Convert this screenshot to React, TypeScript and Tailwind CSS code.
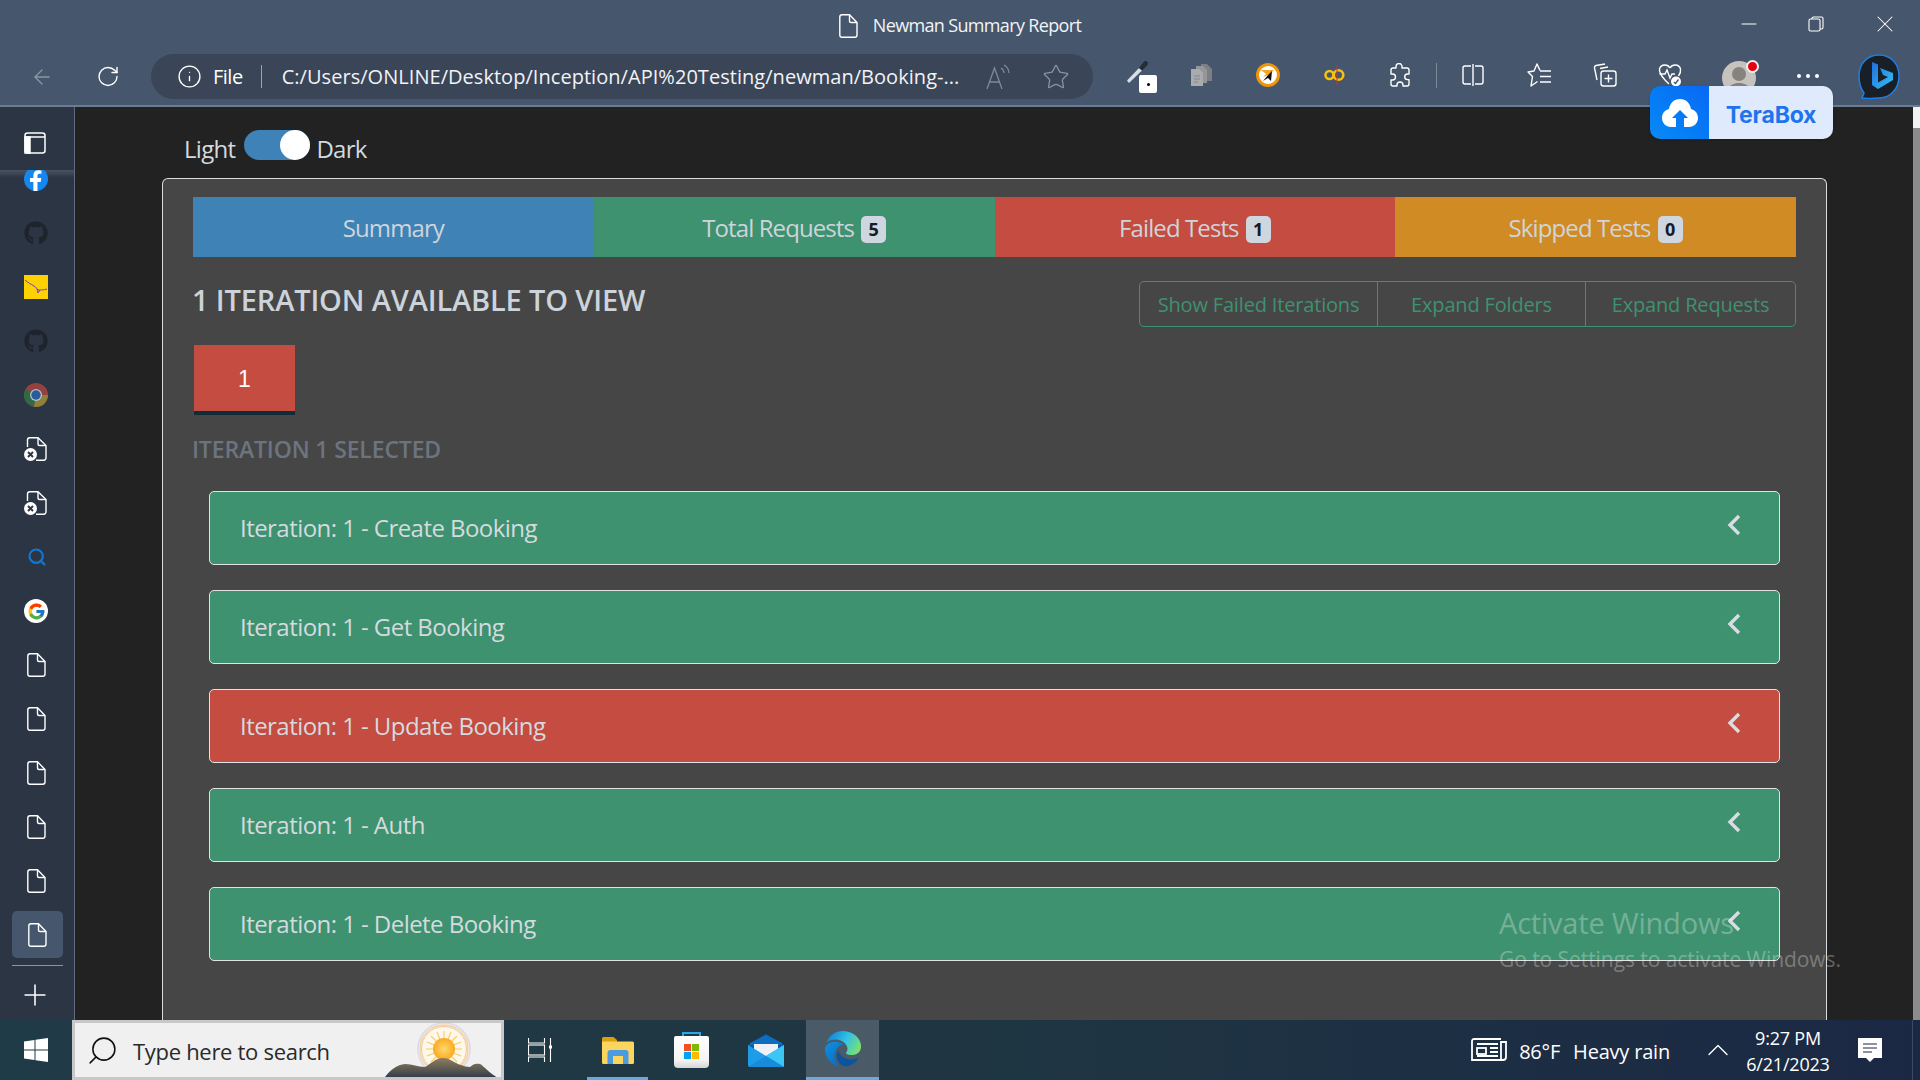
import { ArrowLeft, RotateCw, Info, Star, Minus, X, Plus, Search, ChevronUp } from "lucide-react";
import { FaGithub } from "react-icons/fa";
import { FcGoogle } from "react-icons/fc";

const FONT = "font-['Open_Sans','Noto_Sans',sans-serif]";

function Doc({ size = 24, className = "" }: { size?: number; className?: string }) {
  return (
    <svg width={size} height={size} viewBox="0 0 24 24" fill="none" stroke="currentColor" strokeWidth="1.4" className={className}>
      <path d="M6 .8h7.500L21 8.500V21a2.200 2.200 0 0 1-2.200 2.200H6A2.200 2.200 0 0 1 3.800 21V3A2.200 2.200 0 0 1 6 .8Z" />
      <path d="M13.500 1v6a1.500 1.500 0 0 0 1.500 1.500h6" />
    </svg>
  );
}

function DocX() {
  return (
    <svg width="24" height="24" viewBox="0 0 24 24" fill="none">
      <path d="M3.500 10V3A2.200 2.200 0 0 1 5.700 .8h8.300L22 8.500V21a2.200 2.200 0 0 1-2.200 2.200H12" stroke="white" strokeWidth="1.400" />
      <path d="M14 1v6a1.500 1.500 0 0 0 1.500 1.500h6.500" stroke="white" strokeWidth="1.400" />
      <circle cx="6.500" cy="17.500" r="6.500" fill="white" />
      <path d="M4 15l5 5M9 15l-5 5" stroke="#2b3543" strokeWidth="1.900" />
    </svg>
  );
}

function Yahoo() {
  return (
    <svg width="24" height="24" viewBox="0 0 24 24">
      <rect width="24" height="24" fill="#fdd000" />
      <path d="M1 5c3 3 6 4 9 6 2 1 3 3 4 4 3 0 6 0 9-1" fill="none" stroke="#7b3fb5" strokeWidth="1" />
      <path d="M13 14l1 4 2-3" fill="none" stroke="#7b3fb5" strokeWidth="1" />
    </svg>
  );
}

function Facebook() {
  return (
    <svg width="24" height="24" viewBox="0 0 24 24">
      <circle cx="12" cy="12" r="12" fill="#1787f0" />
      <path d="M13.500 24v-9h3.200l.6-3.900h-3.800V8.800c0-1.100.5-2 2.100-2h1.800V3.500s-1.500-.3-3-.3c-3.100 0-5 1.900-5 5.200v2.700H6v3.900h3.400v9Z" fill="white" />
    </svg>
  );
}

function Chrome() {
  return (
    <svg width="24" height="24" viewBox="0 0 24 24">
      <circle cx="12" cy="12" r="12" fill="#93423f" />
      <path d="M12 12 1.600 6A12 12 0 0 0 10 23.800Z" fill="#2e6a45" />
      <path d="M12 12h12A12 12 0 0 1 10 23.800Z" fill="#8d8238" />
      <circle cx="12" cy="12" r="6" fill="#b9bec6" />
      <circle cx="12" cy="12" r="4.700" fill="#2a5b9b" />
    </svg>
  );
}

function PanelIcon() {
  return (
    <svg width="22" height="22" viewBox="0 0 22 22" fill="none" stroke="white" strokeWidth="1.500">
      <rect x="1" y="1" width="20" height="20" rx="2.500" />
      <path d="M1 5h20" />
      <rect x="1" y="5" width="5" height="16" fill="white" />
    </svg>
  );
}

function SplitIcon() {
  return (
    <svg width="24" height="24" viewBox="0 0 24 24" fill="none" stroke="white" strokeWidth="1.400">
      <path d="M10 3H4a2 2 0 0 0-2 2v14a2 2 0 0 0 2 2h6M14 3h6a2 2 0 0 1 2 2v14a2 2 0 0 1-2 2h-6M12 1v22" />
    </svg>
  );
}

function FavIcon() {
  return (
    <svg width="24" height="24" viewBox="0 0 24 24" fill="none" stroke="white" strokeWidth="1.400" strokeLinejoin="round">
      <path d="M13 7.500 10 1 7 8 1 9l4.500 4.500L4 23l6.500-4.500" />
      <path d="M13 8h11M13 13.500h11M13 19h11" />
    </svg>
  );
}

function CollectionsIcon() {
  return (
    <svg width="26" height="24" viewBox="0 0 26 24" fill="none" stroke="white" strokeWidth="1.400">
      <path d="M13 1 4 2.500a2 2 0 0 0-1.500 2.400L5 17" />
      <path d="M8 5.500 16 4" />
      <rect x="9" y="8" width="15" height="15" rx="2.500" />
      <path d="M16.500 11.500v8M12.500 15.500h8" />
    </svg>
  );
}

function HeartIcon() {
  return (
    <svg width="24" height="24" viewBox="0 0 24 24" fill="none" stroke="white" strokeWidth="1.400">
      <path d="M12 5C10 1 3 .5 1.500 6 1 9 2.500 12 7 17l4 4M12 5c2-4 9-4.500 10.500 1 .5 3-.5 5-2 7" />
      <path d="M1.500 11H7l2-4 3 8 2-4h3" />
      <circle cx="18" cy="18.500" r="5" fill="white" stroke="none" />
      <path d="M16 19l1.500 1.500 3-4" stroke="#46566c" />
    </svg>
  );
}

function Eyedropper() {
  return (
    <div className="relative w-[31px] h-[33px]">
      <svg width="23" height="23" viewBox="0 0 23 23" className="absolute left-0 top-0">
        <path d="M1 20.500 13 8l3 2.500L3 23Z" fill="#d9dde2" />
        <path d="M13 8l5-6.500c2-1.500 5 1 3.500 3.500L16 10.500Z" fill="#262d38" />
      </svg>
      <div className="absolute right-0 bottom-0 w-[18px] h-[18px] bg-white rounded-[2px] flex items-center justify-center">
        <div className="w-[3px] h-[3px] bg-black rounded-full" />
      </div>
    </div>
  );
}

function GrayDocs() {
  return (
    <svg width="21" height="22" viewBox="0 0 21 22">
      <path d="M10 0h6l5 5v12H10Z" fill="#7d7f83" />
      <path d="M5 2h7l4 4v13H5Z" fill="#94969a" />
      <path d="M0 5h8l4 4v13H0Z" fill="#a9abae" />
      <path d="M3 12h6M3 15h6M3 18h4" stroke="#85878b" />
    </svg>
  );
}

function OrangeBadge() {
  return (
    <svg width="24" height="24" viewBox="0 0 24 24">
      <circle cx="12" cy="12" r="10.500" fill="white" stroke="#f09409" strokeWidth="3" />
      <path d="M5 7h13l-5 5-6 2 3-3Z" fill="#f6a623" />
      <path d="M7 18l6-7 3-3-1 10-3-3Z" fill="#111" />
    </svg>
  );
}

function CoIcon() {
  return (
    <svg width="21" height="22" viewBox="0 0 21 22" fill="none">
      <circle cx="5.500" cy="11" r="4" stroke="#f5c211" strokeWidth="2.600" />
      <circle cx="14.500" cy="11" r="4.800" stroke="#f5c211" strokeWidth="2.600" />
      <path d="M13 1v20" stroke="#d0302c" strokeWidth="1" />
    </svg>
  );
}

function PuzzleIcon() {
  return (
    <svg width="23" height="25" viewBox="0 0 23 25" fill="none" stroke="white" strokeWidth="1.400" strokeLinejoin="round">
      <path d="M8 3.500a3 3 0 0 1 6 0V5h5a2 2 0 0 1 2 2v4h-1.500a2.800 2.800 0 0 0 0 5.600H21V21a2 2 0 0 1-2 2h-4v-1a3 3 0 0 0-6 0v1H5a2 2 0 0 1-2-2v-4h1.500a3 3 0 0 0 0-6H3V7a2 2 0 0 1 2-2h3Z" />
    </svg>
  );
}

function Avatar() {
  return (
    <div className="relative w-[34px] h-[34px] rounded-full bg-[#c6c2be] overflow-visible">
      <svg width="34" height="34" viewBox="0 0 34 34" className="rounded-full">
        <circle cx="17" cy="13" r="7" fill="#85827f" />
        <path d="M4 34c1-10 8-12 13-12s12 2 13 12Z" fill="#85827f" />
      </svg>
      <div className="absolute right-[-3px] top-[-1px] w-[13px] h-[13px] rounded-full bg-[#e4000f] border-2 border-[#f0f0f0]" />
    </div>
  );
}

function BingIcon() {
  return (
    <svg width="44" height="45" viewBox="0 0 44 45">
      <defs>
        <linearGradient id="bingB" x1="0" y1="0" x2="1" y2="1">
          <stop offset="0" stopColor="#1f6fe0" />
          <stop offset="1" stopColor="#35c1f1" />
        </linearGradient>
      </defs>
      <path d="M22 1C10 1 2 10 2 22c0 7 2 13 5 17l-2 5c6 1 12 0 17 0 12 0 20-10 20-22S34 1 22 1Z" fill="#191f27" stroke="#1e7fe0" strokeWidth="1.500" />
      <path d="M15 8l6 2.500v18l10-5.500-5-2-3-7 13 5v7l-15 9-6-4Z" fill="url(#bingB)" />
    </svg>
  );
}

function ReadAloud() {
  return (
    <svg width="26" height="26" viewBox="0 0 26 26" fill="none" stroke="#80899a" strokeWidth="1.300">
      <path d="M1 25 8.500 4 16 25M3.500 18h10" />
      <path d="M15 4a6 6 0 0 1 3 5M18 1a10 10 0 0 1 5 8" />
    </svg>
  );
}

function WinLogo() {
  return (
    <svg width="24" height="24" viewBox="0 0 24 24" fill="white">
      <path d="M0 3.500 10.500 2v9.500H0ZM11.500 1.800 24 0v11.500H11.500ZM0 12.500h10.500V22L0 20.500ZM11.500 12.500H24V24l-12.500-1.800Z" />
    </svg>
  );
}

function TaskView() {
  return (
    <svg width="24" height="24" viewBox="0 0 24 24" fill="none" stroke="white" strokeWidth="1.100">
      <path d="M.5 0v5h16V0M.5 24v-5h16v5" />
      <rect x=".5" y="7" width="16" height="10" />
      <path d="M22.500 0v24" />
      <rect x="21" y="7.500" width="3" height="3" fill="white" stroke="none" />
    </svg>
  );
}

function Explorer() {
  return (
    <svg width="32" height="27" viewBox="0 0 32 27">
      <path d="M0 1.500A1.500 1.500 0 0 1 1.500 0h10l3.500 3v3H0Z" fill="#d99f0d" />
      <path d="M0 4.500h30.500A1.500 1.500 0 0 1 32 6v19.500a1.500 1.500 0 0 1-1.500 1.500h-29A1.500 1.500 0 0 1 0 25.500Z" fill="#fbd560" />
      <path d="M5.500 16a3 3 0 0 1 3-3h15a3 3 0 0 1 3 3v11h-5.500v-8h-10v8H5.500Z" fill="#4a9be0" />
    </svg>
  );
}

function Store() {
  return (
    <svg width="35" height="36" viewBox="0 0 35 36">
      <defs>
        <linearGradient id="bag" x1="0" y1="0" x2="0" y2="1">
          <stop offset="0" stopColor="#ffffff" />
          <stop offset="0.75" stopColor="#f4f4f4" />
          <stop offset="1" stopColor="#d5d5d5" />
        </linearGradient>
      </defs>
      <path d="M9 6V1h17v5" fill="none" stroke="#2aa9ea" strokeWidth="2" />
      <path d="M0 6a2 2 0 0 1 2-2h31a2 2 0 0 1 2 2v26a4 4 0 0 1-4 4H4a4 4 0 0 1-4-4Z" fill="url(#bag)" />
      <rect x="10" y="12" width="7" height="7" fill="#f25022" />
      <rect x="18" y="12" width="7" height="7" fill="#7fba00" />
      <rect x="10" y="20" width="7" height="7" fill="#00a4ef" />
      <rect x="18" y="20" width="7" height="7" fill="#ffb900" />
    </svg>
  );
}

function Mail() {
  return (
    <svg width="36" height="33" viewBox="0 0 36 33">
      <path d="M0 11 18 0l18 11v3H0Z" fill="#0a5cad" />
      <path d="M2 9 18 1l16 8v2H2Z" fill="#0f6dc0" />
      <path d="M6 10h24v12H6Z" fill="#eef2f6" />
      <path d="M0 11 18 22 36 11v20a2 2 0 0 1-2 2H2a2 2 0 0 1-2-2Z" fill="#1f9ce8" />
      <path d="M36 11v22L18 22Z" fill="#3cc6f6" />
      <path d="M0 33 18 22l18 11Z" fill="#1789d9" opacity="0.9" />
    </svg>
  );
}

function Edge() {
  return (
    <svg width="36" height="36" viewBox="0 0 24 24">
      <defs>
        <linearGradient id="edgeTop" x1="0" y1="0.3" x2="1" y2="0.7">
          <stop offset="0" stopColor="#0d84d6" />
          <stop offset="0.5" stopColor="#33bfe8" />
          <stop offset="1" stopColor="#7de46a" />
        </linearGradient>
        <linearGradient id="edgeLeft" x1="0" y1="0" x2="0.6" y2="1">
          <stop offset="0" stopColor="#0f8fe0" />
          <stop offset="1" stopColor="#0a6fc4" />
        </linearGradient>
      </defs>
      <path d="M21.860 17.860q.14 0 .25.12.1.13.1.25t-.11.33l-.32.46-.43.53-.44.5q-.21.25-.38.42l-.22.23q-.58.53-1.340 1.040-.76.51-1.600.91-.86.4-1.740.64t-1.670.24q-.9 0-1.690-.28-.8-.28-1.480-.78-.68-.5-1.220-1.170-.53-.66-.92-1.440-.38-.77-.58-1.600-.2-.83-.2-1.670 0-1 .32-1.960.33-.97.87-1.800.14.95.55 1.770.41.82 1.020 1.500.6.68 1.380 1.210.78.54 1.640.9.86.36 1.770.56.92.2 1.800.2 1.120 0 2.180-.24 1.060-.23 2.060-.72l.2-.1.2-.05z" fill="#0c549f" />
      <path d="M6.360 16.590q0 1.100.27 2.150.27 1.060.78 2.030.51.96 1.240 1.770.74.82 1.660 1.400-1.470-.2-2.800-.74-1.330-.55-2.480-1.370-1.150-.83-2.080-1.900-.92-1.070-1.580-2.330T.36 14.940Q0 13.540 0 12.060q0-.81.32-1.490.31-.68.83-1.230.53-.55 1.200-.96.66-.4 1.350-.66.74-.27 1.500-.39.78-.12 1.550-.12.7 0 1.420.1.72.12 1.400.35.68.23 1.320.57.63.35 1.160.83-.35 0-.7.07-.33.07-.65.23v-.02q-.63.28-1.200.74-.57.46-1.050 1.040-.48.58-.87 1.260-.38.67-.65 1.390-.27.71-.42 1.440-.15.72-.15 1.380z" fill="url(#edgeLeft)" />
      <path d="M11.960.06q1.700 0 3.330.39 1.630.38 3.070 1.150 1.430.77 2.620 1.930 1.180 1.160 1.980 2.700.49.94.76 1.960.28 1 .28 2.080 0 .89-.23 1.700-.24.8-.69 1.480-.45.68-1.100 1.220-.64.53-1.450.88-.54.24-1.110.36-.58.13-1.160.13-.42 0-.97-.03-.54-.03-1.100-.12-.55-.1-1.050-.28-.5-.19-.84-.5-.12-.09-.23-.24-.1-.16-.1-.33 0-.15.16-.35.16-.2.35-.5.2-.28.36-.68.16-.4.16-.95 0-1.060-.4-1.960-.4-.91-1.060-1.640-.66-.74-1.520-1.280-.86-.55-1.790-.89-.84-.3-1.720-.44-.87-.14-1.760-.14-1.550 0-3.060.45T.94 7.550q.71-1.740 1.810-3.130 1.100-1.380 2.520-2.350Q6.680 1.100 8.370.58q1.700-.52 3.580-.52Z" fill="url(#edgeTop)" />
    </svg>
  );
}

function SearchArt() {
  return (
    <svg width="118" height="54" viewBox="0 0 118 54" className="absolute right-0 top-0">
      <defs>
        <linearGradient id="mount" x1="0" y1="0" x2="0" y2="1">
          <stop offset="0" stopColor="#8f7c60" />
          <stop offset="0.5" stopColor="#5d5a52" />
          <stop offset="1" stopColor="#25344a" />
        </linearGradient>
        <radialGradient id="sunCore">
          <stop offset="0" stopColor="#ffd970" />
          <stop offset="1" stopColor="#fba91f" />
        </radialGradient>
      </defs>
      <circle cx="61" cy="26" r="26" fill="#fdf8ea" stroke="#d9d8ec" strokeWidth="1.500" />
      <circle cx="61" cy="26" r="24" fill="none" stroke="#f0d5a0" strokeWidth="1.500" />
      <circle cx="61" cy="26" r="22.500" fill="none" stroke="#f6c4a0" strokeWidth="1" />
      <g stroke="#fbcb63" strokeWidth="1.100">
        <path d="M61 8v36M43 26h36M48 13l26 26M74 13 48 39M54 9l14 34M68 9 54 43M44 19l34 14M78 19 44 33" />
      </g>
      <circle cx="61" cy="26" r="11" fill="url(#sunCore)" />
      <path d="M2 54C8 46 14 42 22 41c8 0 12 3 20 3 6-3 10-9 18-9 7 0 11 5 18 7 3 1 6 2 9 2 3-3 6-4 10-3 3 1 5 6 21 16Z" fill="url(#mount)" />
    </svg>
  );
}

function TeraCloud() {
  return (
    <svg width="36" height="28" viewBox="0 0 36 28">
      <path d="M9 28C4 28 0 24 0 19 0 14 3 11 7 10 8 4 12 0 18 0s10 4 11 10c4 1 7 4 7 9 0 5-4 9-9 9h-5v-9h4l-8-8-8 8h4v9Z" fill="white" />
    </svg>
  );
}

function Tab({ label, count, color }: { label: string; count?: number; color: string }) {
  return (
    <div className={`flex-1 flex items-center justify-center gap-[7px] text-[24px] tracking-[-0.9px] text-[#ced4da] ${color}`}>
      <span className="pt-[2px]">{label}</span>
      {count !== undefined && (
        <span className="w-[25px] h-[27px] rounded-[5px] bg-[#ced6e0] text-[#161b26] text-[18px] font-bold flex items-center justify-center mt-[5px] tracking-normal">
          {count}
        </span>
      )}
    </div>
  );
}

function Row({ label, color }: { label: string; color: string }) {
  return (
    <div className={`h-[74px] rounded-[5px] border-[1.5px] border-[#dfe3e6] ${color} flex items-center justify-between pl-[30px] pr-[38px]`}>
      <span className="text-[24px] text-[#d5dadf] tracking-[-0.55px]">{label}</span>
      <svg width="14" height="22" viewBox="0 0 14 22" fill="none" stroke="#d8dde2" strokeWidth="3.400" className="mb-[7px]">
        <path d="M12 2 3 11l9 9" />
      </svg>
    </div>
  );
}

const sideDocs = [0, 1, 2, 3, 4];

export default function App() {
  return (
    <div className={`relative w-[1920px] h-[1080px] overflow-hidden flex flex-col bg-[#222222] ${FONT}`}>
      {/* Browser chrome */}
      <header className="h-[107px] shrink-0 bg-[#46566c] border-b-2 border-[#6b7b90] flex flex-col">
        <div className="h-[54px] flex items-start">
          <div className="flex-1" />
          <div className="flex items-center gap-[13px] pt-[12px] pl-[18px] text-white">
            <Doc size={24} />
            <span className="text-[18px] tracking-[-0.65px] text-[#f2f4f7]">Newman Summary Report</span>
          </div>
          <div className="flex-1 flex justify-end items-center gap-[47px] pr-[21px] pt-[10px] text-white">
            <Minus size={24} strokeWidth={1} />
            <svg width="16" height="16" viewBox="0 0 16 16" fill="none" stroke="white" strokeWidth="1.100">
              <rect x="1" y="3" width="11" height="12" rx="1.500" />
              <path d="M4 3V2.500A1.500 1.500 0 0 1 5.500 1h8A1.500 1.500 0 0 1 15 2.500v9a1.500 1.500 0 0 1-1.500 1.500H12" />
            </svg>
            <X size={28} strokeWidth={0.9} />
          </div>
        </div>
        <div className="h-[45px] flex items-center pl-[30px]">
          <ArrowLeft size={26} strokeWidth={1.3} className="text-[#8d98a8] w-[24px]" />
          <RotateCw size={25} strokeWidth={1.4} className="text-white ml-[42px] w-[24px]" />
          <div className="ml-[31px] w-[942px] h-[45px] rounded-[23px] bg-[#3a4557] flex items-center pl-[26px] text-white">
            <Info size={25} strokeWidth={1.3} />
            <span className="ml-[11px] text-[20px] tracking-[-0.5px]">File</span>
            <span className="ml-[18px] w-px h-[23px] bg-[#9aa4b1]" />
            <span className="ml-[20px] w-[680px] whitespace-nowrap text-[20px] tracking-[0.04px] text-[#f1f3f6]">C:/Users/ONLINE/Desktop/Inception/API%20Testing/newman/Booking-...</span>
            <span className="ml-[24px]"><ReadAloud /></span>
            <Star size={28} strokeWidth={1.100} className="ml-[30px] text-[#8b93a1]" />
          </div>
          <div className="ml-[33px]"><Eyedropper /></div>
          <div className="ml-[34px] mb-[4px]"><GrayDocs /></div>
          <div className="ml-[44px] mb-[3px]"><OrangeBadge /></div>
          <div className="ml-[44px] mb-[3px]"><CoIcon /></div>
          <div className="ml-[43px] mb-[3px]"><PuzzleIcon /></div>
          <div className="ml-[25px] w-px h-[25px] bg-[#7f8b9b] mb-[3px]" />
          <div className="ml-[24px] mb-[3px]"><SplitIcon /></div>
          <div className="ml-[42px] mb-[3px]"><FavIcon /></div>
          <div className="ml-[41px] mb-[3px]"><CollectionsIcon /></div>
          <div className="ml-[40px] mb-[3px]"><HeartIcon /></div>
          <div className="ml-[40px] mt-[3px]"><Avatar /></div>
          <div className="ml-[41px] flex gap-[5px] mb-[1px]">
            <span className="w-[4px] h-[4px] rounded-full bg-white" />
            <span className="w-[4px] h-[4px] rounded-full bg-white" />
            <span className="w-[4px] h-[4px] rounded-full bg-white" />
          </div>
          <div className="ml-[38px]"><BingIcon /></div>
        </div>
      </header>

      {/* Middle */}
      <div className="flex-1 flex min-h-0">
        <aside className="w-[75px] shrink-0 bg-[#2b3543] border-r border-[#5f6c7e] flex flex-col overflow-hidden">
          <div className="h-[63px] shrink-0 flex items-center justify-start pl-[24px] pt-[8px]">
            <PanelIcon />
          </div>
          <div className="flex-1 flex flex-col items-start pl-[24px] gap-[30px] overflow-hidden bg-[linear-gradient(#4a5361,#2b3543_8px)]">
            <div className="-mt-[3px]"><Facebook /></div>
            <FaGithub size={24} className="text-[#1e242c] shrink-0" />
            <Yahoo />
            <FaGithub size={24} className="text-[#1e242c] shrink-0" />
            <Chrome />
            <DocX />
            <DocX />
            <Search size={20} strokeWidth={2.600} className="text-[#1077d4] ml-[3px] h-[24px]" />
            <div className="w-[24px] h-[24px] rounded-full bg-white flex items-center justify-center"><FcGoogle size={19} /></div>
            {sideDocs.map((i) => (
              <Doc key={i} className="text-white" />
            ))}
          </div>
          <div className="shrink-0 flex flex-col items-center pb-[8px]">
            <div className="relative w-[51px] h-[47px] rounded-[5px] bg-[#46566c] flex items-center justify-center text-white">
              <Doc />
            </div>
            <div className="w-[51px] h-px bg-[#8a94a3] mt-[7px]" />
            <Plus size={34} strokeWidth={1.100} className="text-white mt-[12px] -ml-[5px]" />
          </div>
        </aside>

        <main className="flex-1 min-w-0 flex flex-col pt-[23px] pl-[87px] overflow-hidden">
          <div className="h-[30px] flex items-center shrink-0 pl-[22px] text-[24px] text-[#d4d9df] tracking-[-0.7px]">
            <span className="mt-[8px]">Light</span>
            <span className="ml-[9px] w-[66px] h-[30px] rounded-full bg-[#3f82b8] flex justify-end">
              <span className="w-[30px] h-[30px] rounded-full bg-white" />
            </span>
            <span className="ml-[6px] mt-[8px]">Dark</span>
          </div>
          <section className="mt-[18px] w-[1665px] flex-1 bg-[#464646] border-[1.500px] border-[#d9dde0] border-b-0 rounded-t-[6px] pt-[18px] pl-[30px] pr-[30px]">
            <div className="flex h-[60px]">
              <Tab label="Summary" color="bg-[#3f82b6]" />
              <Tab label="Total Requests" count={5} color="bg-[#3e9270]" />
              <Tab label="Failed Tests" count={1} color="bg-[#c44c40]" />
              <Tab label="Skipped Tests" count={0} color="bg-[#d18b24]" />
            </div>
            <div className="mt-[24px] flex justify-between items-start">
              <h1 className="-ml-px text-[29px] font-semibold text-[#cdd3da] tracking-[-0.15px] leading-[38px]">1 ITERATION AVAILABLE TO VIEW</h1>
              <div className="flex h-[46px] rounded-[5px] border-[1.500px] border-[#3e9270] text-[#3e9270] text-[20px] tracking-[-0.17px]">
                <div className="w-[237px] flex items-center justify-center pt-[1px]">Show Failed Iterations</div>
                <div className="w-[208px] border-l-[1.500px] border-[#3e9270] flex items-center justify-center pt-[1px]">Expand Folders</div>
                <div className="w-[210px] border-l-[1.500px] border-[#3e9270] flex items-center justify-center pt-[1px]">Expand Requests</div>
              </div>
            </div>
            <div className="mt-[18px] ml-px w-[101px] h-[70px] bg-[#c44c40] border-b-4 border-[#0f2c38] flex items-center justify-center pt-[2px] text-white text-[23px] font-['Liberation_Sans',sans-serif]">
              1
            </div>
            <h2 className="mt-[19px] -ml-px text-[23px] font-semibold text-[#6c7480] tracking-[-0.15px] leading-[30px]">ITERATION 1 SELECTED</h2>
            <div className="mt-[27px] ml-[16px] mr-[16px] flex flex-col gap-[25px]">
              <Row label="Iteration: 1 - Create Booking" color="bg-[#3e9270]" />
              <Row label="Iteration: 1 - Get Booking" color="bg-[#3e9270]" />
              <Row label="Iteration: 1 - Update Booking" color="bg-[#c44c40]" />
              <Row label="Iteration: 1 - Auth" color="bg-[#3e9270]" />
              <Row label="Iteration: 1 - Delete Booking" color="bg-[#3e9270]" />
            </div>
          </section>
        </main>

        <div className="w-[7px] shrink-0 flex flex-col">
          <div className="h-[21px] bg-[#f2f2f2]" />
          <div className="flex-1 bg-[#8b8b8b]" />
        </div>
      </div>

      {/* Taskbar */}
      <footer className="h-[60px] shrink-0 bg-linear-to-r from-[#1f3b47] via-[#1f3642] to-[#1b2844] flex items-center text-white">
        <div className="w-[72px] flex justify-center"><WinLogo /></div>
        <div className="relative w-[432px] h-full bg-[#f0f0f0] border-[3px] border-[#c8c8c8] flex items-center overflow-hidden">
          <Search size={33} strokeWidth={1.100} className="ml-[11px] text-[#111] scale-x-[-1]" />
          <span className="ml-[14px] mt-[2px] text-[22px] text-[#2a2a2a] tracking-[-0.3px]">Type here to search</span>
          <SearchArt />
        </div>
        <div className="ml-[24px]"><TaskView /></div>
        <div className="relative ml-[35px] w-[61px] h-full flex justify-center items-center">
          <Explorer />
          <div className="absolute bottom-0 left-0 right-0 h-[3px] bg-[#6aa9de]" />
        </div>
        <div className="ml-[26px]"><Store /></div>
        <div className="ml-[39px]"><Mail /></div>
        <div className="relative ml-[22px] w-[73px] h-full bg-[#4a5a66] flex justify-center items-center">
          <div className="mb-[2px]"><Edge /></div>
          <div className="absolute bottom-0 left-0 right-0 h-[3px] bg-[#6aa9de]" />
        </div>
        <div className="flex-1" />
        <svg width="36" height="24" viewBox="0 0 36 24" fill="none" stroke="white" strokeWidth="1.800">
          <path d="M30 1H3a2 2 0 0 0-2 2v19h31a3 3 0 0 0 3-3V4h-5v18" />
          <path d="M6 6h21M6 18h21" />
          <rect x="6" y="10" width="9" height="6" />
          <path d="M19 10h8M19 14h8" />
        </svg>
        <span className="ml-[12px] mt-[3px] text-[20px] tracking-[-0.2px]">86°F</span>
        <span className="ml-[13px] mt-[3px] text-[20px] tracking-[-0.2px]">Heavy rain</span>
        <ChevronUp size={36} strokeWidth={0.900} className="ml-[30px]" />
        <div className="ml-[10px] mt-[2px] w-[84px] flex flex-col items-center text-[18px] leading-[26px] tracking-[-0.2px]">
          <span>9:27 PM</span>
          <span>6/21/2023</span>
        </div>
        <div className="ml-[28px] mr-[30px] relative w-[24px] h-[24px]">
          <svg width="24" height="24" viewBox="0 0 24 24">
            <path d="M0 0h24v20h-8l-4 4-4-4H0Z" fill="white" />
            <path d="M5 6h14M5 10h14M5 14h9" stroke="#1b2844" strokeWidth="1.200" />
          </svg>
        </div>
        <div className="w-px self-stretch bg-[#3b4a60] mr-[7px]" />
      </footer>

      {/* Overlays */}
      <div className="absolute left-[1650px] top-[86px] w-[183px] h-[53px] rounded-[10px] overflow-hidden flex shadow-sm">
        <div className="w-[59px] bg-linear-to-tr from-[#0a8af5] to-[#0a68f5] flex items-center justify-center pl-[12px] pr-[11px]">
          <TeraCloud />
        </div>
        <div className="flex-1 bg-[#dfebfc] flex items-center justify-center pt-[5px] text-[#1f74ee] text-[23px] font-bold font-['Inter',sans-serif] tracking-[-0.2px]">TeraBox</div>
      </div>
      <div className="absolute left-[1499px] top-[903px] text-white/30 pointer-events-none">
        <div className="text-[29px] leading-[40px] tracking-[-0.2px]">Activate Windows</div>
        <div className="text-[21px] leading-[28px] mt-[2px] tracking-[-0.06px] whitespace-nowrap">Go to Settings to activate Windows.</div>
      </div>
    </div>
  );
}
